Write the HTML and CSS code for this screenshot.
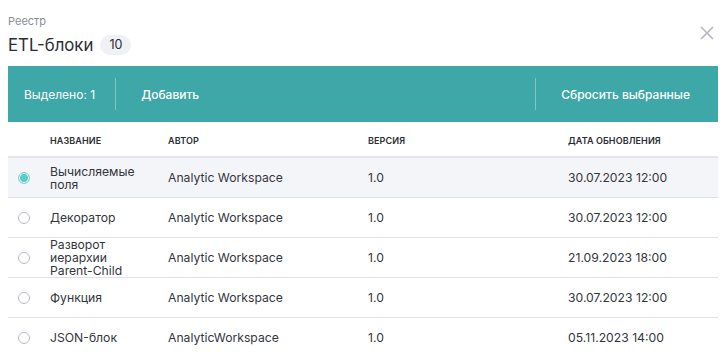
FILE: index.html
```html
<!DOCTYPE html>
<html>
  <head>
    <title>ETL-блоки</title>
    <link rel="stylesheet" href="styles.css">
  </head>
  <body>
    <div class="dialog">
      <div class="head">
        <div>
          <div class="crumb">Реестр</div>
          <h1>ETL-блоки <span class="badge">10</span></h1>
        </div>
        <svg class="close" width="14" height="14" viewBox="0 0 14 14">
          <path d="M1 1L13 13M13 1L1 13" stroke="#b3b6c4" stroke-width="1.6" fill="none"/>
        </svg>
      </div>

      <div class="toolbar">
        <span class="count">Выделено: 1</span>
        <span class="sep"></span>
        <span class="action">Добавить</span>
        <span class="grow"></span>
        <span class="sep"></span>
        <span class="action reset">Сбросить выбранные</span>
      </div>

      <div class="table">
        <div class="row th">
          <span></span>
          <span>НАЗВАНИЕ</span>
          <span>АВТОР</span>
          <span>ВЕРСИЯ</span>
          <span>ДАТА ОБНОВЛЕНИЯ</span>
        </div>
        <div class="row selected">
          <span class="radio on"></span>
          <span class="name">Вычисляемые поля</span>
          <span>Analytic Workspace</span>
          <span>1.0</span>
          <span>30.07.2023 12:00</span>
        </div>
        <div class="row">
          <span class="radio"></span>
          <span class="name">Декоратор</span>
          <span>Analytic Workspace</span>
          <span>1.0</span>
          <span>30.07.2023 12:00</span>
        </div>
        <div class="row">
          <span class="radio"></span>
          <span class="name">Разворот иерархии Parent-Child</span>
          <span>Analytic Workspace</span>
          <span>1.0</span>
          <span>21.09.2023 18:00</span>
        </div>
        <div class="row">
          <span class="radio"></span>
          <span class="name">Функция</span>
          <span>Analytic Workspace</span>
          <span>1.0</span>
          <span>30.07.2023 12:00</span>
        </div>
        <div class="row">
          <span class="radio"></span>
          <span class="name">JSON-блок</span>
          <span>AnalyticWorkspace</span>
          <span>1.0</span>
          <span>05.11.2023 14:00</span>
        </div>
      </div>
    </div>
  </body>
</html>
```

FILE: styles.css
```css
body {
  margin: 0;
  font-family: Inter, "Noto Sans", sans-serif;
  color: #2b2d33;
  background: #fff;
}
.dialog {
  padding: 0 8px;
}
.head {
  display: flex;
  justify-content: space-between;
  align-items: flex-start;
  padding: 14px 0 10px 0;
}
.crumb {
  font-size: 11px;
  color: #8a8d99;
  line-height: 14px;
}
h1 {
  margin: 6px 0 0 0;
  font-size: 16.8px;
  font-weight: 400;
  line-height: 22px;
  display: flex;
  align-items: center;
  gap: 7px;
}
.badge {
  font-size: 12.5px;
  background: #f0f1f5;
  border-radius: 10px;
  padding: 2px 9px;
  line-height: 16px;
}
.close {
  margin-top: 12px;
  margin-right: 4px;
}
.toolbar {
  background: #3ea7a7;
  height: 56px;
  display: flex;
  align-items: center;
  color: #fff;
  font-size: 12px;
  padding: 0 28px 0 16px;
}
.sep {
  width: 1px;
  height: 32px;
  background: rgba(255, 255, 255, 0.35);
  margin: 0 25px 0 20px;
}
.action {
  font-weight: 500;
}
.grow {
  flex: 1;
}
.row {
  display: grid;
  grid-template-columns: 42px 118px 200px 200px 1fr;
  align-items: center;
  height: 40px;
  border-bottom: 1px solid #dfe1e7;
  box-sizing: border-box;
  font-size: 12.2px;
  line-height: 13px;
  color: #33363d;
}
.th {
  height: 36px;
  font-size: 9px;
  font-weight: 600;
  letter-spacing: 0.1px;
  border-bottom: 2px solid #e4e6eb;
  padding-top: 2px;
  color: #2b2d33;
}
.selected {
  background: #f4f5f8;
}
.name {
  padding-right: 16px;
}
.radio {
  width: 10px;
  height: 10px;
  border-radius: 50%;
  border: 1px solid #b9bcc8;
  margin-left: 10px;
  box-sizing: content-box;
}
.radio.on {
  background: #5ccbc9;
  border: 1px solid #8cdcdb;
  box-shadow: inset 0 0 0 1px #fff;
}
```
